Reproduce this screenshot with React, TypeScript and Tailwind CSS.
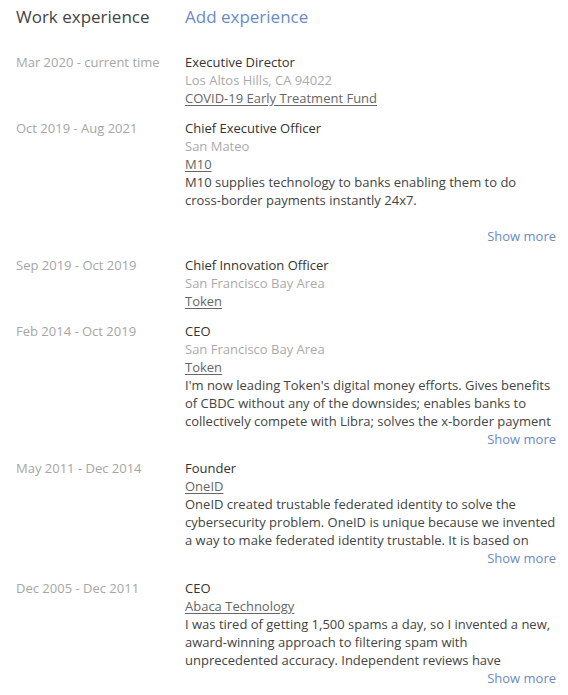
import React from "react";

type Item = {
  date: string;
  title: string;
  location?: string;
  company: string;
  desc?: React.ReactNode;
};

const items: Item[] = [
  { date: "Mar 2020 - current time", title: "Executive Director", location: "Los Altos Hills, CA 94022", company: "COVID-19 Early Treatment Fund" },
  { date: "Oct 2019 - Aug 2021", title: "Chief Executive Officer", location: "San Mateo", company: "M10", desc: <>M10 supplies technology to banks enabling them to do <span className="whitespace-nowrap">cross-border</span> payments instantly 24x7.</> },
  { date: "Sep 2019 - Oct 2019", title: "Chief Innovation Officer", location: "San Francisco Bay Area", company: "Token" },
  { date: "Feb 2014 - Oct 2019", title: "CEO", location: "San Francisco Bay Area", company: "Token", desc: "I'm now leading Token's digital money efforts. Gives benefits of CBDC without any of the downsides; enables banks to collectively compete with Libra; solves the x-border payment problem and more." },
  { date: "May 2011 - Dec 2014", title: "Founder", company: "OneID", desc: "OneID created trustable federated identity to solve the cybersecurity problem. OneID is unique because we invented a way to make federated identity trustable. It is based on public key cryptography." },
  { date: "Dec 2005 - Dec 2011", title: "CEO", company: "Abaca Technology", desc: "I was tired of getting 1,500 spams a day, so I invented a new, award-winning approach to filtering spam with unprecedented accuracy. Independent reviews have confirmed it." },
];

export default function App() {
  return (
    <div className="w-[568px] h-[695px] bg-white overflow-hidden" style={{ fontFamily: '"Open Sans", sans-serif' }}>
      <div className="flex pl-[16px] pt-[4px] text-[17px] leading-[26px]">
        <div className="w-[169px] text-[#444444]">Work experience</div>
        <div className="text-[#6a8bc6]">Add experience</div>
      </div>
      <div className="mt-[23px] flex flex-col gap-[11.5px] text-[13px] leading-[18px]">
        {items.map((it, i) => (
          <div key={i} className="flex pl-[16px] pr-[12px]">
            <div className="w-[169px] shrink-0 text-[#a6a6a6]">{it.date}</div>
            <div className="flex-1 min-w-0">
              <div className="text-[#333333]">{it.title}</div>
              {it.location && <div className="text-[#aaaaaa]">{it.location}</div>}
              <div><span className="text-[#666666] underline underline-offset-2">{it.company}</span></div>
              {it.desc && (
                <>
                  <div className="h-[54px] overflow-hidden text-[#444444]">{it.desc}</div>
                  <div className="text-right text-[#6a8bc6]">Show more</div>
                </>
              )}
            </div>
          </div>
        ))}
      </div>
    </div>
  );
}
